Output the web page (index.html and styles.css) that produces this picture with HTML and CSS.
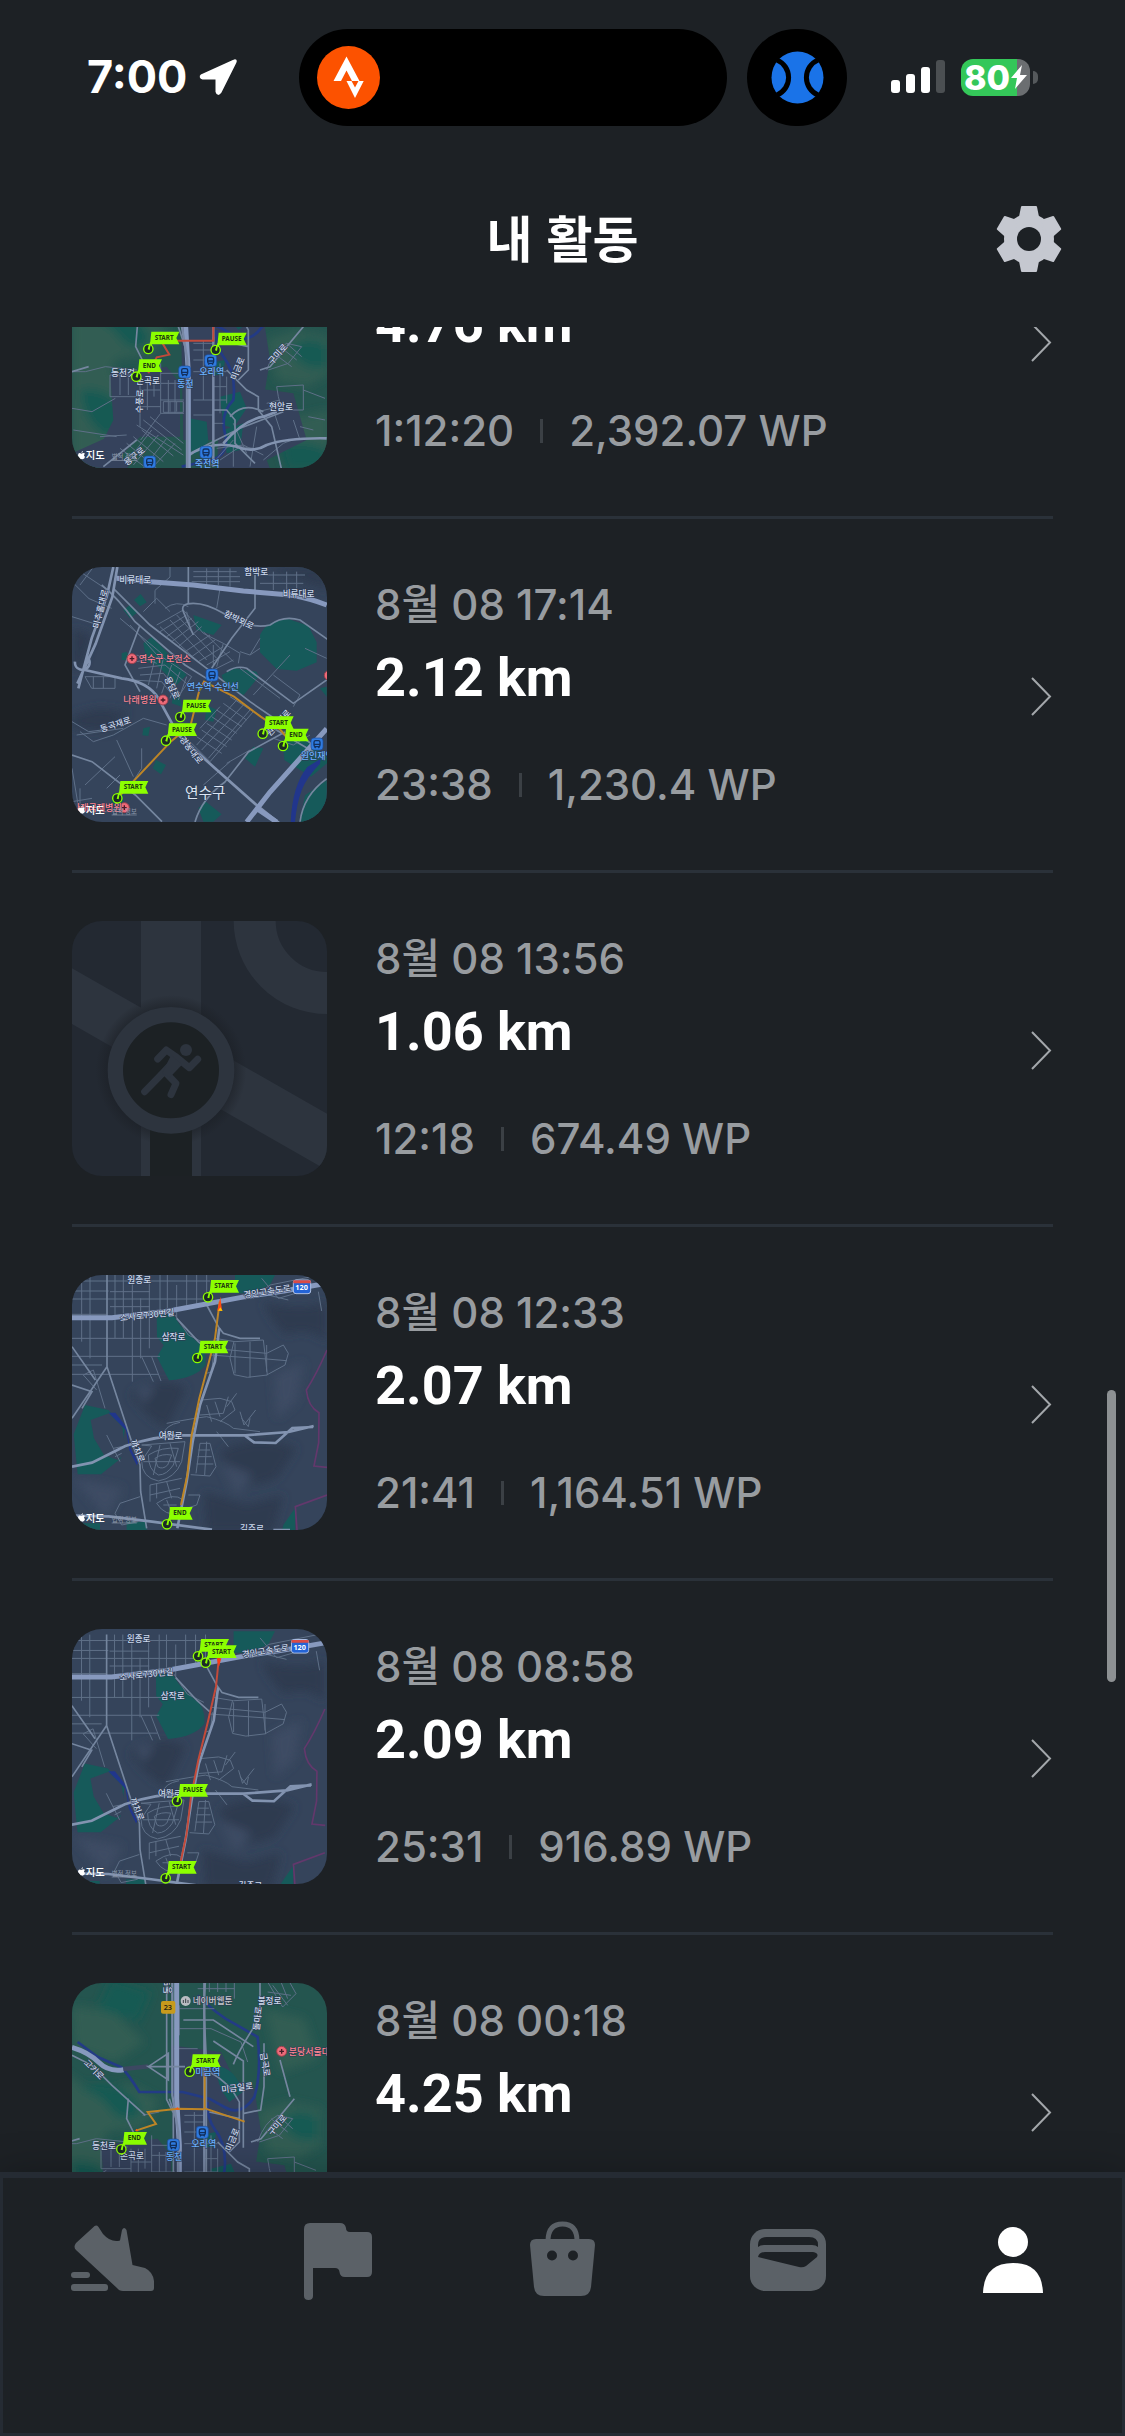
FILE: index.html
```html
<!DOCTYPE html>
<html lang="ko">
<head>
<meta charset="utf-8">
<meta name="viewport" content="width=device-width, initial-scale=1">
<title>내 활동</title>
<link rel="stylesheet" href="styles.css">
</head>
<body>
<svg class="sprite" aria-hidden="true">
  <defs>
    <filter id="soft" x="-20%" y="-20%" width="140%" height="140%"><feGaussianBlur stdDeviation="14"/></filter>
    <g id="pin-base"><path class="lime" d="M-2 0 5-20h8L5 2z"/><circle class="pin-dot" r="14"/><path class="lime" d="M-2 1 2-14h5L4 3z"/></g>
    <g id="pin-start"><path class="lime" d="M9-52H93L84-33 93-14H5z"/><use href="#pin-base"/><text class="pin-text" x="19" y="-27">START</text></g>
    <g id="pin-pause"><path class="lime" d="M9-52H93L84-33 93-14H5z"/><use href="#pin-base"/><text class="pin-text" x="18" y="-27">PAUSE</text></g>
    <g id="pin-end"><path class="lime" d="M9-52H77L68-33 77-14H5z"/><use href="#pin-base"/><text class="pin-text" x="19" y="-27">END</text></g>
    <g id="station"><rect class="station" x="-18" y="-18" width="36" height="36" rx="9"/><rect class="station-line" x="-9" y="-10" width="18" height="18" rx="5"/><path class="station-line" d="M-9 1H9M-7 12l3-4M7 12l-3-4"/></g>
    <g id="hospital"><circle class="hospital" r="15"/><path class="hospital-cross" d="M-7 0H7M0-7V7"/></g>
    <g id="credit"><path class="white" d="M9-17q-9-5-10 5 1 12 8 12 3-2 6 0 6-1 7-8-6-5 0-9-4-4-11 0zM9-19q0-5 5-7 0 6-5 7z"/><text class="credit-text" x="22" y="0">지도</text><text class="credit-legal" x="100" y="0">법적 정보</text></g>
    <g id="map-bucheon">
      <rect class="land" x="0" y="0" width="840" height="840"/>
      <g filter="url(#soft)">
        <path class="relief" d="M610 110q120 30 190 0v120q-60-50-120-20-50-40-70-100zM210 390q90-70 170-20l-60 120q-60-30-110-100zM480 560q110-60 230-10l-60 90q-120 60-170-80zM430 680l130 40 110-30-30 110H440z"/>
        <path class="relief light" d="M640 330l90-40-20 120-60 50zM480 590l100 40-50 60zM40 640l150 30-50 90zM230 370l60-10-40 60z"/>
      </g>
      <path class="park" d="M290 150h50l20 30 45 45q35 20 32 75-30 40-110 46l-36-70 20-35-20-25zM525 20h125l-20 40-60 25h-45zM75 420l70 15 50 55-12 90-60 48-70 0-12-120zM60 775h60v30H60zM200 770h60v30h-60zM670 780l35-50v70h-40z"/>
      <path class="land" d="M92 465l55-20 40 40 10 80-25 20-40-15-30-50z"/>
      <path class="water" d="M146 443l20 0 35 45 8 55 25 50-4 8-22-45-10-60z"/>
      <path class="minor" d="M36 48H450M36 102H450M36 148H140M36 220H310M36 274H300M36 328H295M65 30v200M90 30v250M165 30v190M190 30v190M217 30v320M242 100v180M268 30v220M300 30v110M322 30v100M350 60v100M380 30v90M410 30v90M440 30v70M36 78h110M150 80h120M150 125h120M36 300h90M245 275l35 75M275 275l28 73M70 330l30-15 35 115M70 330l40 45M345 150l40 60 50 25M465 220l60 10 85-5 12 105-60 7-40-8-12-50 12-50M525 235v90M570 230v108M620 240v80M450 270l170 12 60 5M455 250l165 15 50-25 15 25-10 35-55 30M440 325l15-5 6-55M425 405l55-5 35 10 10 25-45 35M420 450l70-5 15-50M440 420l15 50M465 410l15 45M500 425l30-40M540 440l12 40 35-45M545 460l20 25 5-25M580 100l50-40 150-30M605 40l50 60 70-20M625 90l60 15M775 80l10 58M320 475q80-15 120-20 60 15 80 35l80 10M310 510q5-30 50-38M470 500l35 45"/>
      <path class="minor" d="M245 540l130-10-10 60q-20 50-70 58-50-10-50-60l30-45zM265 570q40-25 90-20l-15 50q-20 30-45 30-30-15-30-60zM285 580q20-15 50-10l-12 30q-15 15-30 5zM300 540l-20 90M330 535l20 70M250 590l110 0M420 535l30 0 18 70-18 28-58-4M420 535l-12 90M440 530l-6 100M415 555h35M412 575h43M410 597h50M270 660l95-20M270 660v50M290 655v45M320 650l15 50M270 690l90-20M290 715q50-35 80-10l-10 40q-45 10-70-30zM310 720h40M320 705l15 40M385 690l35 0-10 30-30 10M240 695l-60 20-15 30 20 35 50-10M140 510l40 80M160 550l25-5M165 575l20-10"/>
      <path class="road" d="M141 30V305L36 460M141 305L215 530 240 600 242 680 260 790M36 245l70 100M36 360l60 20-30 50M350 160l65 70 40 35M440 120l35 65 15 20 50 15 60 0"/>
      <path class="road thick" d="M36 605l60-12 100-50q100-33 180-32h180l130-10 75-18M552 510l30 22 65 2 50-45 62-3M36 752l110 2 130 16 180 24M640 795h50"/>
      <path class="road thick" d="M478 190L465 290 420 420 398 530 380 650 352 790"/>
      <path class="highway" d="M36 158h120l170-20 230-43 120-18 125-22"/>
      <path class="border-line" d="M801 255q-30 70-62 120 5 50 38 68l-1 90-14 70 40 4M801 690l-95 35 5 70"/>
      <text class="label" x="202" y="53">원종로</text><text class="label" x="305" y="226">삼작로</text><text class="label" x="296" y="521">여월로</text>
      <text class="label" transform="translate(181 168) rotate(-6)">소사로730번길</text>
      <text class="label big" transform="translate(552 100) rotate(-9)">경인고속도로</text>
      <text class="label" transform="translate(211 528) rotate(68)">까치로</text>
      <text class="label" x="540" y="800">길주로</text>
      <rect class="shield" x="700" y="45" width="52" height="41" rx="8"/><path class="shield-top" d="M700 46h52v9h-52z"/><text class="shield-text" x="706" y="76">120</text>
    </g>
    <g id="map-bundang">
      <rect class="hill" x="0" y="-400" width="900" height="1300"/>
      <g filter="url(#soft)">
        <path class="hill-a" d="M36-60l90 60 110-25 90 50-50 80-100 10-60 80-80-30zM36 120l110 25 80 80 20 60-60 100-80 10-70 50zM620 60l90-30 100 20v110l-70 40-90-20zM620 260l100 30 90-20v130l-120-20zM36 420h90l40 60-130 40zM60-260l130 20 90 90-90 60-120-40zM640-250l120 30 40 120-110 40z"/>
        <path class="hill-b" d="M90-10q60-30 120 0t60 80q-60 30-90-15t-90-65zM60 210q80-10 120 50t-40 90q-70-40-80-140zM690 80q60-40 110 0v60q-80 20-110-60zM660 380q70-30 140 10v60H680zM180-340l120 40-40 90-120-40z"/>
      </g>
      <path class="town" d="M360-140l150 20 40 80 60 30 20 130-30 180-50 60H370zM150 160l170-20 40 50v160H240l-60 60-60-30 40-80zM480 190l220 30 40 140-120 60 30 80H470zM400-10h80v180h-80zM36 400l110-50 60 90-90 60H36z"/>
      <path class="park" d="M390 295l50 10 5 60-40 40-20-30zM480 230l60-15 20 50-40 60-30-10zM445 130l50-10-5 45h-40zM495-80q60 10 80 80l-40 30q-40-50-40-110zM490 330l60-20-10 80-40 10z"/>
      <path class="river" d="M440-290q60 60 110 85l70 40q12 110-10 180-40 60-90 30l-45-25-80-20H265q-30-50-55-75l-70-30-60-45M470 30q-5 40 20 80 40 50 30 130-40 40-25 100t-40 80l-90 20"/>
      <path class="minor" d="M36 155h40l60-15 95 10M150 165h80M150 165v65h90M180 165v60M205 165v60M36 265l60 10 70-40M240 170v150M262 170v100M282 170v60M302 130v150l-60 80M302 190h70M302 240h70M302 280h70M302 160h70M325 180v100M345 180v100M240 210h60M240 260h62M310 245h60v32h-60zM330 245v30M350 245v30M400 70h60M400 90h60M400 120h60M400 155h100M400 240h100M400 285h60M430 60v180M480 130v150M500 170v80M460 200h40M460 310h30M370-250h120M370-190h110l90 40 20 60M370-130h70M385-260v90M440-310h110M450-340h100v60M475-370v70M500-370v70M525-370v70M650-330l60-10 25 45-40 40zM665-320l45 60M690-330l20 50M650-300l70 10"/>
      <path class="minor" d="M620 150q20-60 60-80l45 10-40 50-60 20M660 80l50 40M680 70l45 40M655 110l40 30M650 200l80-5v75h-65l-10-40zM620 250l40-10M730 210l65 25M655 260l-60 15M745 290l50 10M700 300l20 60M720 320l40 10M640 270l20 60M610 420l60-50 40-15M230 315l140 90M250 300l115 90M270 290l100 80M200 370l90 75M220 350l90 75M245 330l95 78M180 385l80 60M275 330l-70 90M295 345l-75 90M320 355l-70 90M345 370l-70 75M470 385l80-10 60 30M480 420l60-40 40 5M450 440l70-80M520 440v-60M570 440l20-120M275 70l50-10M40 330l130 20M120 350l80-5M520 310l40 90"/>
      <path class="road" d="M232 20l-5 60 20 40M355 20l20 60M475-60q60 30 90 90v120l-30 30M475 60l90 20M500 150l60 60 35 20v40l40 50 30 130M460 50v390M600 150l30-10 100-120M510 290q40-45 100-15M36 155l50-15M130 440l100-80M380 405l160-80 130-50M460 270h40l25 30v70l60 60"/>
      <path class="road thick" d="M380 410q70-50 150-30 50 20 90-5 60-22 180-20M490 370q60-70 120-80l40-15"/>
      <path class="highway" d="M377-360V20L385 160V450"/>
      <path class="highway thin" d="M364-360V10l18 110V445M460-360V440"/>
    </g>
    <symbol id="chevron" viewBox="0 0 21 39"><path d="M1 1 19 19.500 1 38" fill="none" stroke="#a3a7ab" stroke-width="2"/></symbol>
  </defs>
</svg>

<div class="status-bar">
  <div class="clock"><time>7:00</time>
    <svg width="39" height="38" viewBox="0 0 39 38"><path d="M35 3 3 17.500Q1 19 4 20H17.500Q18 20 18 21V33.500Q19 37 21 34L36 4Q37 2 35 3Z" fill="#fff" stroke="#fff" stroke-width="3" stroke-linejoin="round"/></svg>
  </div>
  <div class="island">
    <svg width="63" height="63" viewBox="0 0 63 63"><circle cx="31.500" cy="31.500" r="31.500" fill="#fc5200"/><path d="M29.500 10.500 42.500 35H35L29.500 24.500 24 35H16.500ZM29.500 35H34.500L38 41.500 41.500 35H46.700L38 52Z" fill="#fff"/></svg>
  </div>
  <div class="island-dot">
    <svg width="53" height="53" viewBox="0 0 53 53"><circle cx="26.500" cy="26.500" r="26" fill="#1a73e8"/><path d="M6 9A19 19 0 0 1 6 44M47 9A19 19 0 0 0 47 44" fill="none" stroke="#000" stroke-width="5"/></svg>
  </div>
  <div class="signals">
    <svg width="54" height="34" viewBox="0 0 54 34"><g fill="#fff"><rect y="20" width="9" height="13" rx="3"/><rect x="15" y="14" width="9" height="19" rx="3"/><rect x="30" y="7" width="9" height="26" rx="3"/></g><rect x="45" width="9" height="33" rx="3" fill="#4b4f52"/></svg>
    <div class="battery"><span>80</span><svg class="bolt" width="18" height="26" viewBox="0 0 18 26"><path d="M12 1 1 14H7L5 25 17 11H10Z" fill="#fff"/></svg></div>
    <i class="battery-cap"></i>
  </div>
</div>

<header class="title-bar">
  <h1>내 활동</h1>
  <button class="icon-button" type="button" aria-label="설정">
    <svg width="66" height="66" viewBox="-33 -33 66 66">
      <g fill="#c5c8d0" stroke="#c5c8d0" stroke-width="2" stroke-linejoin="round"><circle r="24"/>
        <path id="tooth" d="M-7-32H7L9-22 13-18H-13L-9-22Z"/><use href="#tooth" transform="rotate(60)"/><use href="#tooth" transform="rotate(120)"/><use href="#tooth" transform="rotate(180)"/><use href="#tooth" transform="rotate(240)"/><use href="#tooth" transform="rotate(300)"/></g>
      <circle r="12" fill="#1d2125"/>
    </svg>
  </button>
</header>

<main class="feed">
  <ul class="activities">
    <li><a class="activity" href="#a1">
      <svg class="thumb" viewBox="36 -321 765 765">
        <use href="#map-bundang"/>
        <path class="track red" d="M265 160l25-48 38-8-30-50M350 62h110V-20"/>
        <text class="label" x="153" y="167">동천것</text><text class="label" x="228" y="192">손곡로</text>
        <text class="label" transform="translate(247 280) rotate(-88)">수풍로</text>
        <text class="label" transform="translate(528 182) rotate(-68)">미금로</text>
        <text class="label" transform="translate(636 135) rotate(-48)">구미로</text>
        <text class="label" x="627" y="271">현암로</text>
        <text class="label" transform="translate(200 438) rotate(-38)">용구로</text>
        <use href="#station" x="374" y="156"/><text class="label blue" x="351" y="201">동천</text>
        <use href="#station" x="452" y="122"/><text class="label blue" x="418" y="166">오리역</text>
        <use href="#station" x="438" y="397"/><text class="label blue" x="404" y="440">죽전역</text>
        <use href="#station" x="269" y="426"/>
        <use href="#pin-start" x="265" y="87"/><use href="#pin-pause" x="467" y="90"/><use href="#pin-end" x="229" y="170"/>
        <use href="#credit" x="55" y="418"/>
      </svg>
      <div class="info">
        <strong class="distance">4.76 km</strong>
        <p class="stats"><span>1:12:20</span><i></i><span>2,392.07 WP</span></p>
      </div>
      <svg class="chevron"><use href="#chevron"/></svg>
    </a></li>

    <li><a class="activity" href="#a2">
      <svg class="thumb" viewBox="36 36 765 765">
        <rect class="land" x="0" y="0" width="840" height="840"/>
        <path class="relief" filter="url(#soft)" d="M36 220l60 20-30 100-30 10zM36 480l80-20 90 10-60 60-110-10zM600 36l200 0v70z"/>
        <path class="park" d="M600 240q20-45 85-48l60 20 25 50 0 60-60 25-60-5-50-50zM485 360l40-20 65 10 6 15-45 55-55-25zM400 180l85 30-25 30-50-15zM190 165l20-15 25 20-25 20zM222 135l20-18 18 25-20 12zM250 265l25-20 15 15 30 30 60 70-30 30-60-60-30-10zM340 420l20 5 5 30-30-10zM440 450l30 15-10 35-25-5zM555 610l25-35 30 5-25 55zM278 640l10-25 30 15-15 28zM250 520l20-5-5 28-18-2zM415 760l20-22 50 40-25 22h-30zM720 801l15-80 65-45v125zM668 560l70-5 75 60-60 50-80-50zM185 295l15-5 10 25-25 0zM780 400l20-5v30zM160 720l30-10v40h-40z"/>
        <path class="water" d="M692 801q5-110 50-165l40-25-2 15q-40 40-55 80t-20 95z"/>
        <path class="minor" d="M60 50l90 60M36 80l50 50M36 185l80 25M100 36L60 90M85 130l70 30M180 190l130 110M210 210l90 100M230 300l60 25M250 170L290 130l40 40M330 36v30l-45 40v40M315 160q35-25 70-5M400 50h130M400 65h140M395 80h145M440 40v50M475 40v50M510 40v55M600 60h135M600 85h130M640 50v55M680 50v55M710 50v50M290 210l80-45 60 70 60 30 50 30-5 30M300 230l80-50M320 245l75-55M335 260l80-60M355 275l70-60M375 290l75-50M395 305l70-50M415 320l75-45M440 330l70-40M460 345l60-30M330 195l110 120M350 180l120 130M300 215l120 110M380 170l10 40M430 230l90 90M540 290l30 10 30-20M460 270v60M490 265l-20 70"/>
        <path class="minor" d="M230 320l75-15 90 60-40 60M235 340l80-10 70 60M240 360l70-5 50 60M215 375l90 5 40 50M285 310l-20 80M310 310l-20 90M335 330l-30 85M360 350l-30 80M380 365l-25 70M75 365l90 0v35H95zM100 365v35M130 365v35M510 425l70 45-130 150-60-60M490 445l70 50M470 465l75 50M455 485l75 50M440 505l75 50M425 525l75 50M410 545l75 50M530 435l-120 135M550 450l-125 135M480 455l-60 65M570 465l-125 145M36 500l50 30 40-5M60 530l40 30 60-20 90-50 70 20M50 540l140-20M170 555l50 110M75 690l90-85M180 660l-40 40M245 580v60l-40 60M640 360l80 60-20 35M580 420l110-120M540 340l120 90M36 740l60-10M60 700v60M95 770h80M500 625l70-40M430 690l80-70M480 100L470 160M36 640l20 120M640 550l60 20 50-30M600 250l-30 50M735 280l65 30"/>
        <path class="road" d="M125 90q50 40 100 110l150 130 80 50M160 100q60 60 110 110l170 130 130 100 190 130M400 240l-30-70q-10-25 30-25t90 30q80 50 140 35 40-30 90-15l85 60M585 60v100l-70 90-60 90M385 36v110M36 600l60 20 130 100 80 80M240 410l-45-80 45-120M500 350q30-20 60-10l140 105 100-70M405 801q20-70 90-120l70-90 110-60M640 520l120 70M720 801q10-80 80-130"/>
        <path class="road thick" d="M160 36l-20 90L95 250 55 400M172 36l-15 90-50 140-55 120M45 320a22 22 0 1 0 35-15M75 345l110 25q80 10 110 60l60 110 110 100 130 115 70 55"/>
        <path class="highway" d="M170 70l100 10 130 10 150 18 140 12q60 10 110 30"/>
        <path class="highway" d="M560 801l70-90 170-190M590 760l60 41"/>
        <path class="track" d="M172 730l160-170 60-50 25-100 15-30 90 45 80 60 60 40 25 30"/>
        <text class="label" x="178" y="83">비류대로</text><text class="label" x="668" y="127">비류대로</text><text class="label" x="553" y="60">함박로</text>
        <text class="label" transform="translate(116 222) rotate(-76)">미추홀대로</text>
        <text class="label" transform="translate(490 182) rotate(26)">함박뫼로</text>
        <text class="label" transform="translate(313 370) rotate(65)">용담로</text>
        <text class="label" transform="translate(357 553) rotate(52)">경농대로</text>
        <text class="label" transform="translate(124 532) rotate(-18)">동곡재로</text>
        <text class="label" transform="translate(630 545) rotate(-48)">원인재로</text>
        <use href="#hospital" x="216" y="311"/><text class="label pink" x="236" y="320">연수구 보건소</text>
        <use href="#hospital" x="309" y="435"/><text class="label pink" x="190" y="445">나래병원</text>
        <use href="#hospital" x="193" y="758"/><text class="label pink" x="36" y="767">나래국제병원</text><use href="#hospital" x="808" y="361"/>
        <use href="#station" x="456" y="360"/><text class="label blue" x="380" y="406">연수역 수인선</text>
        <use href="#station" x="771" y="567"/><text class="label blue" x="722" y="613">원인재역</text>
        <text class="label district" x="375" y="728">연수구</text>
        <use href="#pin-pause" x="361" y="486"/><use href="#pin-pause" x="318" y="557"/><use href="#pin-start" x="608" y="536"/><use href="#pin-end" x="669" y="573"/><use href="#pin-start" x="172" y="730"/>
        <use href="#credit" x="55" y="776"/>
      </svg>
      <div class="info">
        <span class="date">8월 08 17:14</span>
        <strong class="distance">2.12 km</strong>
        <p class="stats"><span>23:38</span><i></i><span>1,230.4 WP</span></p>
      </div>
      <svg class="chevron"><use href="#chevron"/></svg>
    </a></li>

    <li><a class="activity" href="#a3">
      <svg class="thumb" viewBox="36 33 765 765">
        <defs><radialGradient id="halo"><stop offset=".8" stop-color="#1b1f25" stop-opacity=".7"/><stop offset="1" stop-color="#1b1f25" stop-opacity="0"/></radialGradient></defs>
        <rect x="36" y="33" width="765" height="765" fill="#232932"/>
        <path d="M243 33H423V798H243ZM36 175 801 611V781L36 342Z" fill="#2d343e"/>
        <circle cx="801" cy="33" r="217" fill="none" stroke="#2d343e" stroke-width="126" transform="translate(0 -1)"/>
        <circle cx="333" cy="481" r="226" fill="url(#halo)"/>
        <path d="M270 640H396V798H270Z" fill="#1c2124"/>
        <circle cx="333" cy="481" r="167" fill="#1c2124" stroke="#2d343e" stroke-width="46"/>
        <circle cx="378" cy="420" r="18" fill="#2d343e"/>
        <path d="M293 447 319 420 346 439 388 473 413 448M347 448 298 500 254 545M319 490 348 520 333 554" fill="none" stroke="#2d343e" stroke-width="21" stroke-linecap="round" stroke-linejoin="round"/>
        <path d="M334 434 366 464 330 502 306 490Z" fill="#2d343e"/>
      </svg>
      <div class="info">
        <span class="date">8월 08 13:56</span>
        <strong class="distance">1.06 km</strong>
        <p class="stats"><span>12:18</span><i></i><span>674.49 WP</span></p>
      </div>
      <svg class="chevron"><use href="#chevron"/></svg>
    </a></li>

    <li><a class="activity" href="#a4">
      <svg class="thumb" viewBox="36 30 765 765">
        <use href="#map-bucheon"/>
        <path class="track" d="M479 110L465 220 447 290 418 400 395 510 382 630 363 720"/>
        <path d="M481 95l5 42-14 0z" fill="#ff4a12"/><path d="M474 137l7-10 7 11z" fill="#ffc400"/>
        <use href="#pin-start" x="444" y="97"/><use href="#pin-start" x="412" y="279"/><use href="#pin-end" x="321" y="778"/>
        <use href="#credit" x="55" y="770"/>
      </svg>
      <div class="info">
        <span class="date">8월 08 12:33</span>
        <strong class="distance">2.07 km</strong>
        <p class="stats"><span>21:41</span><i></i><span>1,164.51 WP</span></p>
      </div>
      <svg class="chevron"><use href="#chevron"/></svg>
    </a></li>

    <li><a class="activity" href="#a5">
      <svg class="thumb" viewBox="36 27 765 765">
        <use href="#map-bucheon" transform="translate(0 14) scale(.992)"/>
        <path class="track red" d="M477 110L468 200 445 300 415 420 393 530 380 640 360 735"/>
        <path d="M470 115h14l-7 25z" fill="#ff3a12"/>
        <use href="#pin-start" x="414" y="109"/><use href="#pin-start" x="437" y="128"/><use href="#pin-pause" x="351" y="544"/><use href="#pin-start" x="317" y="775"/>
        <use href="#credit" x="55" y="767"/>
      </svg>
      <div class="info">
        <span class="date">8월 08 08:58</span>
        <strong class="distance">2.09 km</strong>
        <p class="stats"><span>25:31</span><i></i><span>916.89 WP</span></p>
      </div>
      <svg class="chevron"><use href="#chevron"/></svg>
    </a></li>

    <li><a class="activity" href="#a6">
      <svg class="thumb" viewBox="36 39 765 765">
        <use href="#map-bundang" transform="translate(-27 366)"/>
        <path class="highway" d="M36 232q50 15 80 45t75 22"/><path d="M190 297l75-8" stroke="#3c4861" stroke-width="13" fill="none"/>
        <path class="road" d="M265 290l60-40v80l-60-40h110M320 39v350l20 40v180M436 39l-5 60 8 170v350M520 283q20-50 80-140V39M370 150h90l120 80M460 213l90 60v260M612 220v130l-10 70-50 10M36 256l60 30 60 60 100 90M660 270l30 110"/>
        <path class="track" d="M434 310v105l120 40M228 482l60-20-25-36 90-10 80 2"/>
        <path d="M345 417l8-5 4 8zM225 482l5-6 5 8z" fill="#ff5a12"/>
        <rect x="303" y="93" width="43" height="38" rx="6" fill="#c79a1c"/><text x="311" y="120" class="route-text">23</text>
        <circle cx="377" cy="93" r="15" fill="#b9bcc2"/><path d="M370 99V90M377 99V86M384 99V90" stroke="#3a3f48" stroke-width="3"/><text class="label gray" x="398" y="102">네이버웹툰</text>
        <text class="label" x="593" y="103">불정로</text><text class="label" transform="translate(598 182) rotate(-84)">돌마로</text>
        <text class="label" transform="translate(600 250) rotate(80)">금곡로</text><text class="label" transform="translate(70 280) rotate(45)">고기로</text>
        <text class="label" transform="translate(485 368) rotate(-7)">미금일로</text>
        <text class="label" transform="translate(334 72) rotate(-90)">동막로</text>
        <text class="label" transform="translate(512 545) rotate(-68)">미금로</text><text class="label" transform="translate(636 498) rotate(-50)">구미로</text>
        <text class="label" x="96" y="538">동천로</text><text class="label" x="180" y="566">손곡로</text>
        <use href="#hospital" x="665" y="244"/><text class="label pink" x="686" y="254">분당서울대병원</text>
        <text class="label blue" x="406" y="315">미금역</text>
        <use href="#station" x="427" y="487"/><text class="label blue" x="394" y="532">오리역</text>
        <use href="#station" x="340" y="525"/><text class="label blue" x="317" y="570">동천</text>
        <use href="#pin-start" x="389" y="305"/><use href="#pin-end" x="184" y="538"/>
      </svg>
      <div class="info">
        <span class="date">8월 08 00:18</span>
        <strong class="distance">4.25 km</strong>
      </div>
      <svg class="chevron"><use href="#chevron"/></svg>
    </a></li>
  </ul>
  <i class="scroll-thumb"></i>
</main>

<nav class="tabs">
  <a href="#move" aria-label="운동"><svg width="83" height="80" viewBox="0 0 83 80"><g transform="translate(0 6)" fill="#5b6167"><path d="M22 1.500Q25-2 27.500 1L32 8Q40 17 49 14.500L51 4Q53 0 55.500 4L61.500 39 74 42Q82 46 83 55V62Q83 65 80 65H52Q48 65 46 62L5 24Q2 21 5 17Z"/><rect y="46" width="19" height="6" rx="3"/><rect y="58" width="37" height="7" rx="3"/></g></svg></a>
  <a href="#challenge" aria-label="챌린지"><svg width="68" height="80" viewBox="0 0 68 80"><g transform="translate(0 3)" fill="#5b6167"><path d="M0 6Q0 0 6 0H36Q41 0 42 5 42 9 46 9H63Q68 9 68 14V49Q68 54 63 54H41Q36 54 35.500 49 35 45 31 45H9V73Q9 77 4.500 77T0 73Z"/></g></svg></a>
  <a href="#shop" aria-label="상점"><svg width="65" height="80" viewBox="0 0 65 80"><g transform="translate(0 1)"><path d="M18 20Q18 3 32.500 3T47 20" fill="none" stroke="#5b6167" stroke-width="5"/><path d="M6 18H59Q65 18 65 24L61 66Q60 75 51 75H14Q5 75 4 66L0 24Q0 18 6 18Z" fill="#5b6167"/><circle cx="22" cy="34.500" r="5" fill="#1d2125"/><circle cx="43" cy="34.500" r="5" fill="#1d2125"/></g></svg></a>
  <a href="#wallet" aria-label="지갑"><svg width="76" height="80" viewBox="0 0 76 80"><g transform="translate(0 9)"><rect width="76" height="62" rx="15" fill="#5b6167"/><path d="M8 18V16Q8 8 17 8H59Q68 8 68 16V18Q66 16 62 16H14Q10 16 8 18ZM8 28Q9 23 15 23H63Q69 24 67 28L56 37Q53 39 49 38Z" fill="#1d2125"/></g></svg></a>
  <a href="#me" aria-label="내 활동" aria-current="page"><svg width="60" height="80" viewBox="0 0 60 80"><g transform="translate(0 7)" fill="#fff"><circle cx="30" cy="15" r="15"/><path d="M0 66Q1 36 30 36T60 66Z"/></g></svg></a>
</nav>
</body>
</html>
```
FILE: styles.css
```css
* { box-sizing: border-box; }

body {
  margin: 0;
  height: 100vh;
  display: flex;
  flex-direction: column;
  overflow: hidden;
  background: #1d2125;
  color: #fff;
  font-family: Inter, "Noto Sans CJK KR", sans-serif;
}

.sprite { position: absolute; width: 0; height: 0; }
a { color: inherit; text-decoration: none; }

/* status bar */
.status-bar {
  flex: none;
  display: flex;
  align-items: center;
  height: 154px;
  padding: 0 87px;
}
.clock {
  flex: 0 0 212px;
  display: flex;
  align-items: center;
  gap: 12px;
  font-size: 45px;
  line-height: 54px;
  font-weight: 700;
}
.island, .island-dot {
  display: flex;
  align-items: center;
  height: 97px;
  border-radius: 49px;
  background: #000;
}
.island { flex: 0 1 428px; padding-left: 18px; margin-right: 20px; }
.island-dot { flex: none; width: 100px; justify-content: center; }
.signals { flex: 1; display: flex; align-items: center; justify-content: flex-end; }
.battery {
  display: flex;
  align-items: center;
  width: 69px;
  height: 37px;
  margin: 0 3px 0 16px;
  padding-left: 3px;
  border-radius: 12px;
  background: linear-gradient(90deg, #34c759 81%, #6b6e71 81%);
  font-size: 34px;
  line-height: 37px;
  font-weight: 800;
}
.battery-cap { width: 5px; height: 13px; border-radius: 0 6px 6px 0; background: #55595c; }

/* title */
.title-bar {
  flex: none;
  display: grid;
  grid-template-columns: 1fr auto 1fr;
  align-items: center;
  height: 173px;
  padding: 0 63px 3px;
}
.title-bar h1 {
  grid-column: 2;
  margin: 0;
  padding-bottom: 6px;
  font: 700 50px/72px "Noto Sans CJK KR", sans-serif;
}
.icon-button {
  justify-self: end;
  display: flex;
  padding: 0;
  border: 0;
  background: none;
}

/* activity list, scrolled part of the way down */
.feed { position: relative; flex: 1; min-height: 0; overflow: hidden; }
.activities { list-style: none; margin: -162px 0 0; padding: 0 72px; }
.activities li { border-bottom: 3px solid #2a3139; }
.activity { display: flex; align-items: center; gap: 48px; padding: 48px 0; }
.thumb { flex: none; width: 255px; height: 255px; border-radius: 30px; }
.info {
  flex: 1;
  align-self: stretch;
  display: grid;
  grid-template-rows: 69px 111px 51px;
  align-content: start;
  padding-top: 12px;
  color: #989ca0;
  font-size: 42px;
  line-height: 51px;
  font-weight: 500;
}
.date { grid-row: 1; }
.distance { grid-row: 2; font: 700 54px/60px Roboto, sans-serif; color: #fff; }
.stats { grid-row: 3; display: flex; align-items: center; margin: 0; }
.stats i { width: 3px; height: 24px; margin: 0 26px; background: #3b4045; }
.chevron { flex: none; width: 21px; height: 39px; margin: 3px 1px 0 0; }
.scroll-thumb {
  position: absolute;
  top: 1063px;
  right: 9px;
  width: 9px;
  height: 292px;
  border-radius: 5px;
  background: #8d9193;
}

/* tab bar */
.tabs {
  position: relative;
  flex: none;
  display: grid;
  grid-template-columns: repeat(5, 1fr);
  align-items: start;
  height: 264px;
  padding-top: 45px;
  border-top: 3px solid #252b33;
  background: #1d2125;
  box-shadow: inset 0 0 0 3px #252b33, 0 0 36px rgba(0, 0, 0, .25);
}
.tabs a { display: flex; justify-content: center; }

/* map drawing */
.land { fill: #35445b; }
.relief { fill: #2d3b50; }
.relief.light { fill: #3c4c64; }
.park { fill: #165a5a; }
.hill { fill: #24554f; }
.hill-a { fill: #315d52; }
.hill-b { fill: #125a52; }
.town { fill: #35425c; }
.water { fill: #21368c; }
.river { fill: none; stroke: #233b85; stroke-width: 8; }
.minor { fill: none; stroke: #5f7088; stroke-width: 3; }
.road { fill: none; stroke: #75869f; stroke-width: 5; }
.road.thick { stroke: #8293b0; stroke-width: 8; }
.highway { fill: none; stroke: #8799be; stroke-width: 15; }
.highway.thin { stroke: #7888a5; stroke-width: 7; }
.border-line { fill: none; stroke: #63386c; stroke-width: 5; }
.track { fill: none; stroke: #bd8526; stroke-width: 6; }
.track.red { stroke: #c24a3a; }
.label {
  fill: #ccd8ec;
  stroke: #2b3850;
  stroke-width: 3px;
  paint-order: stroke;
  font: 500 26px "Noto Sans CJK KR", sans-serif;
}
.label.blue { fill: #6cb2ff; font-size: 27px; }
.label.pink { fill: #ff8591; font-size: 27px; }
.label.gray { fill: #c6c8cc; }
.label.district { fill: #dde6f4; font-size: 44px; font-weight: 400; }
.lime { fill: #8cff00; }
.pin-dot { fill: #1c2a26; stroke: #8cff00; stroke-width: 4; }
.pin-text { fill: #1d3a10; font: 700 19px "Noto Sans", sans-serif; }
.station { fill: #2f7be0; stroke: #1d4b9a; stroke-width: 2; }
.station-line { fill: none; stroke: #12305f; stroke-width: 4; }
.hospital { fill: #ee6a78; stroke: #98404d; stroke-width: 3; }
.hospital-cross { stroke: #4a1c2a; stroke-width: 4; }
.shield { fill: #2464d6; stroke: #aebfe2; stroke-width: 3; }
.shield-top { fill: #d94b46; }
.shield-text { fill: #fff; font: 700 22px "Noto Sans", sans-serif; }
.route-text { fill: #2a2410; font: 600 22px "Noto Sans", sans-serif; }
.white { fill: #fff; }
.credit-text { fill: #fff; font: 500 31px "Noto Sans CJK KR", sans-serif; }
.credit-legal { fill: #8d99ab; font: 400 19px "Noto Sans CJK KR", sans-serif; text-decoration: underline; }
```
